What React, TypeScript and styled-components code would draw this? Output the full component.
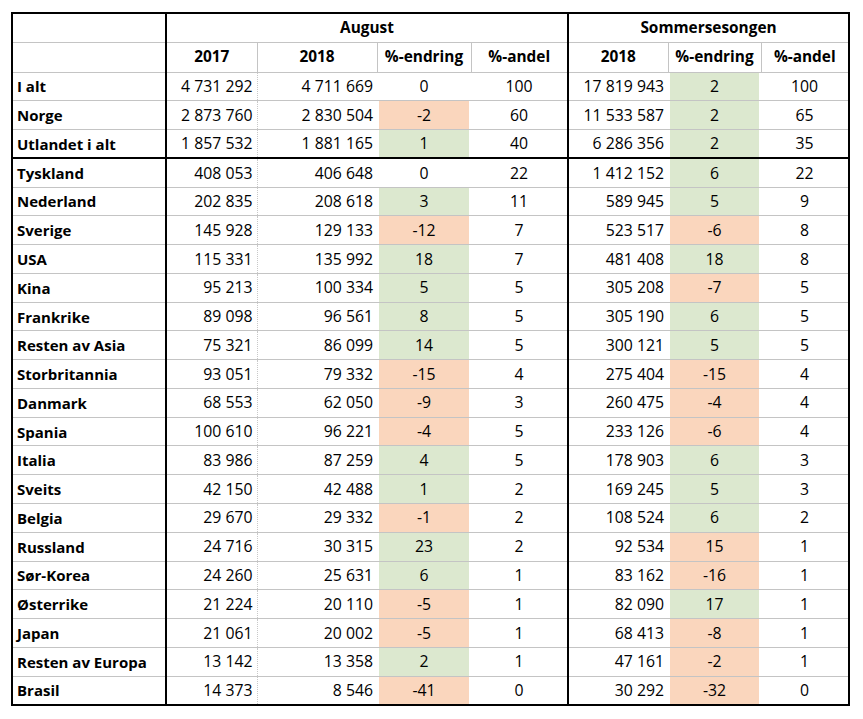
import React from "react";
import styled, { createGlobalStyle, css } from "styled-components";

const Global = createGlobalStyle`
  html, body { margin: 0; padding: 0; background: #ffffff; }
  body { font-family: "Open Sans", "Noto Sans", "Liberation Sans", sans-serif; color: #000; }
`;

const Page = styled.div`
  padding: 12px 0 0 11px;
  width: 863px;
  height: 719px;
  box-sizing: border-box;
`;

const Table = styled.table`
  border-collapse: collapse;
  table-layout: fixed;
  width: 837px;
  border: 2px solid #000;
  font-size: 15px;
`;

type Fill = "green" | "orange" | undefined;
type Align = "left" | "right" | "center";

const fillColor = (f: Fill) =>
  f === "green" ? "#dce8cf" : f === "orange" ? "#fad6bd" : "transparent";

const Cell = styled.td<{
  $align?: Align;
  $bold?: boolean;
  $thickLeft?: boolean;
  $thickTop?: boolean;
  $dottedLeft?: boolean;
  $fill?: Fill;
}>`
  height: 28.78px;
  padding: 1px 4px 0 4px;
  box-sizing: border-box;
  text-align: ${(p) => p.$align ?? "center"};
  font-weight: ${(p) => (p.$bold ? 700 : 400)};
  font-size: ${(p) => (p.$bold ? 15 : 15.8)}px;
  white-space: nowrap;
  border-top: 1.5px solid #c4c4c4;
  border-bottom: 1.5px solid #c4c4c4;
  border-left: none;
  border-right: none;
  line-height: 1;
  ${(p) =>
    p.$thickTop &&
    css`
      border-top: 2px solid #000;
    `}
  ${(p) =>
    p.$thickLeft &&
    css`
      border-left: 2px solid #000;
    `}
  ${(p) =>
    p.$dottedLeft &&
    css`
      border-left: 1px dotted #c8c8c8;
    `}
  ${(p) =>
    p.$fill &&
    css`
      background: linear-gradient(
        to right,
        transparent 2px,
        ${fillColor(p.$fill)} 2px,
        ${fillColor(p.$fill)} calc(100% - 2px),
        transparent calc(100% - 2px)
      );
    `}
`;

const HeadCell = styled.th<{ $thickLeft?: boolean; $grayLeft?: boolean; $h: number }>`
  height: ${(p) => p.$h}px;
  padding: 0 4px;
  box-sizing: border-box;
  text-align: center;
  font-weight: 700;
  font-size: 15.4px;
  white-space: nowrap;
  border-top: none;
  border-bottom: 1.5px solid #c4c4c4;
  border-left: ${(p) =>
    p.$thickLeft ? "2px solid #000" : p.$grayLeft ? "1.5px solid #c4c4c4" : "none"};
  line-height: 1;
`;

type Row = {
  label: string;
  a17: string;
  a18: string;
  ach: string;
  acf: Fill;
  aand: string;
  s18: string;
  sch: string;
  scf: Fill;
  sand: string;
};

const G: Fill = "green";
const O: Fill = "orange";

const rows: Row[] = [
  { label: "I alt", a17: "4 731 292", a18: "4 711 669", ach: "0", acf: undefined, aand: "100", s18: "17 819 943", sch: "2", scf: G, sand: "100" },
  { label: "Norge", a17: "2 873 760", a18: "2 830 504", ach: "-2", acf: O, aand: "60", s18: "11 533 587", sch: "2", scf: G, sand: "65" },
  { label: "Utlandet i alt", a17: "1 857 532", a18: "1 881 165", ach: "1", acf: G, aand: "40", s18: "6 286 356", sch: "2", scf: G, sand: "35" },
  { label: "Tyskland", a17: "408 053", a18: "406 648", ach: "0", acf: undefined, aand: "22", s18: "1 412 152", sch: "6", scf: G, sand: "22" },
  { label: "Nederland", a17: "202 835", a18: "208 618", ach: "3", acf: G, aand: "11", s18: "589 945", sch: "5", scf: G, sand: "9" },
  { label: "Sverige", a17: "145 928", a18: "129 133", ach: "-12", acf: O, aand: "7", s18: "523 517", sch: "-6", scf: O, sand: "8" },
  { label: "USA", a17: "115 331", a18: "135 992", ach: "18", acf: G, aand: "7", s18: "481 408", sch: "18", scf: G, sand: "8" },
  { label: "Kina", a17: "95 213", a18: "100 334", ach: "5", acf: G, aand: "5", s18: "305 208", sch: "-7", scf: O, sand: "5" },
  { label: "Frankrike", a17: "89 098", a18: "96 561", ach: "8", acf: G, aand: "5", s18: "305 190", sch: "6", scf: G, sand: "5" },
  { label: "Resten av Asia", a17: "75 321", a18: "86 099", ach: "14", acf: G, aand: "5", s18: "300 121", sch: "5", scf: G, sand: "5" },
  { label: "Storbritannia", a17: "93 051", a18: "79 332", ach: "-15", acf: O, aand: "4", s18: "275 404", sch: "-15", scf: O, sand: "4" },
  { label: "Danmark", a17: "68 553", a18: "62 050", ach: "-9", acf: O, aand: "3", s18: "260 475", sch: "-4", scf: O, sand: "4" },
  { label: "Spania", a17: "100 610", a18: "96 221", ach: "-4", acf: O, aand: "5", s18: "233 126", sch: "-6", scf: O, sand: "4" },
  { label: "Italia", a17: "83 986", a18: "87 259", ach: "4", acf: G, aand: "5", s18: "178 903", sch: "6", scf: G, sand: "3" },
  { label: "Sveits", a17: "42 150", a18: "42 488", ach: "1", acf: G, aand: "2", s18: "169 245", sch: "5", scf: G, sand: "3" },
  { label: "Belgia", a17: "29 670", a18: "29 332", ach: "-1", acf: O, aand: "2", s18: "108 524", sch: "6", scf: G, sand: "2" },
  { label: "Russland", a17: "24 716", a18: "30 315", ach: "23", acf: G, aand: "2", s18: "92 534", sch: "15", scf: O, sand: "1" },
  { label: "Sør-Korea", a17: "24 260", a18: "25 631", ach: "6", acf: G, aand: "1", s18: "83 162", sch: "-16", scf: O, sand: "1" },
  { label: "Østerrike", a17: "21 224", a18: "20 110", ach: "-5", acf: O, aand: "1", s18: "82 090", sch: "17", scf: G, sand: "1" },
  { label: "Japan", a17: "21 061", a18: "20 002", ach: "-5", acf: O, aand: "1", s18: "68 413", sch: "-8", scf: O, sand: "1" },
  { label: "Resten av Europa", a17: "13 142", a18: "13 358", ach: "2", acf: G, aand: "1", s18: "47 161", sch: "-2", scf: O, sand: "1" },
  { label: "Brasil", a17: "14 373", a18: "8 546", ach: "-41", acf: O, aand: "0", s18: "30 292", sch: "-32", scf: O, sand: "0" },
];

const widths = [154, 91, 120, 94, 97, 100, 93, 88];

export default function App() {
  return (
    <>
      <Global />
      <Page>
        <Table>
          <colgroup>
            {widths.map((w, i) => (
              <col key={i} style={{ width: w }} />
            ))}
          </colgroup>
          <thead>
            <tr>
              <HeadCell $h={29} />
              <HeadCell $h={29} colSpan={4} $thickLeft>
                August
              </HeadCell>
              <HeadCell $h={29} colSpan={3} $thickLeft>
                Sommersesongen
              </HeadCell>
            </tr>
            <tr>
              <HeadCell $h={30} />
              <HeadCell $h={30} $thickLeft>2017</HeadCell>
              <HeadCell $h={30} $grayLeft>2018</HeadCell>
              <HeadCell $h={30} $grayLeft>%-endring</HeadCell>
              <HeadCell $h={30} $grayLeft>%-andel</HeadCell>
              <HeadCell $h={30} $thickLeft>2018</HeadCell>
              <HeadCell $h={30} $grayLeft>%-endring</HeadCell>
              <HeadCell $h={30} $grayLeft>%-andel</HeadCell>
            </tr>
          </thead>
          <tbody>
            {rows.map((r, i) => {
              const top = i === 3;
              return (
                <tr key={r.label}>
                  <Cell $align="left" $bold $thickTop={top}>{r.label}</Cell>
                  <Cell $align="right" $thickLeft $thickTop={top}>{r.a17}</Cell>
                  <Cell $align="right" $dottedLeft $thickTop={top}>{r.a18}</Cell>
                  <Cell $fill={r.acf} $thickTop={top}>{r.ach}</Cell>
                  <Cell $thickTop={top}>{r.aand}</Cell>
                  <Cell $align="right" $thickLeft $thickTop={top}>{r.s18}</Cell>
                  <Cell $fill={r.scf} $thickTop={top}>{r.sch}</Cell>
                  <Cell $thickTop={top}>{r.sand}</Cell>
                </tr>
              );
            })}
          </tbody>
        </Table>
      </Page>
    </>
  );
}
